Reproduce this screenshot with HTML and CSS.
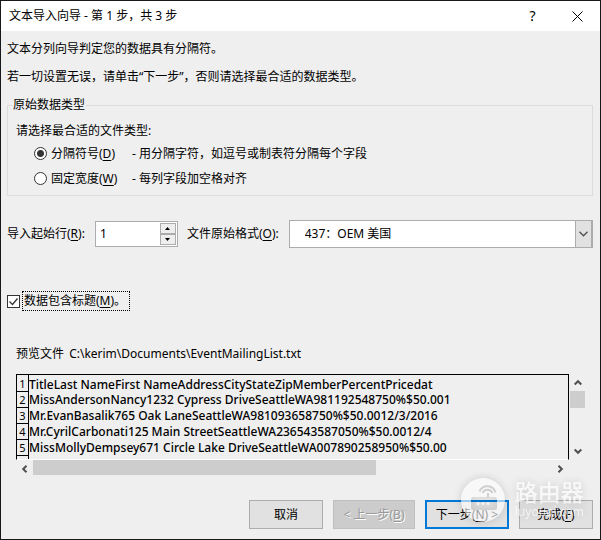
FILE: index.html
```html
<!DOCTYPE html>
<html lang="zh-CN">
<head>
    <meta charset="UTF-8">
    <title>文本导入向导</title>
    <link rel="stylesheet" href="styles.css">
</head>
<body>
<form class="dialog">
    <div class="titleBar">
        <span class="title">文本导入向导 - 第 1 步，共 3 步</span>
        <button type="button" class="titleBtn" aria-label="帮助">?</button>
        <button type="button" class="titleBtn" aria-label="关闭">
            <svg width="11" height="11" viewBox="0 0 11 11"><path d="M.5 .5l10 10M10.5 .5l-10 10" stroke="#000" fill="none"/></svg>
        </button>
    </div>
    <div class="content">
        <p class="tip">文本分列向导判定您的数据具有分隔符。</p>
        <p class="tip">若一切设置无误，请单击“下一步”，否则请选择最合适的数据类型。</p>

        <fieldset class="group">
            <legend>原始数据类型</legend>
            <p class="groupTip">请选择最合适的文件类型:</p>
            <div class="radioRow">
                <input type="radio" name="type" id="delimited" checked>
                <label for="delimited">分隔符号(<u>D</u>)</label>
                <span>- 用分隔字符，如逗号或制表符分隔每个字段</span>
            </div>
            <div class="radioRow">
                <input type="radio" name="type" id="fixed">
                <label for="fixed">固定宽度(<u>W</u>)</label>
                <span>- 每列字段加空格对齐</span>
            </div>
        </fieldset>

        <div class="settings">
            <label for="startRow">导入起始行(<u>R</u>):</label>
            <div class="spinner">
                <input type="text" id="startRow" value="1">
                <div class="spinBtns">
                    <button type="button" aria-label="增加"><svg width="5" height="3" viewBox="0 0 5 3"><path d="M0 3L2.500 0L5 3z"/></svg></button>
                    <button type="button" aria-label="减少"><svg width="5" height="3" viewBox="0 0 5 3"><path d="M0 0L2.500 3L5 0z"/></svg></button>
                </div>
            </div>
            <label for="origin">文件原始格式(<u>O</u>):</label>
            <div class="selectWrap">
                <select id="origin">
                    <option>437：OEM 美国</option>
                </select>
                <span class="selectArrow"><svg width="9" height="6" viewBox="0 0 9 6"><path d="M.5 .8l4 4l4-4" stroke="#505050" stroke-width="1.300" fill="none"/></svg></span>
            </div>
        </div>

        <div class="header">
            <input type="checkbox" id="hasHeader" checked>
            <label for="hasHeader">数据包含标题(<u>M</u>)。</label>
        </div>

        <div class="preview">
            <p class="fileName">预览文件 <span>C:\kerim\Documents\EventMailingList.txt</span></p>
            <div class="viewport">
                <div class="rows">
                    <table>
                        <tr><th>1</th><td>TitleLast NameFirst NameAddressCityStateZipMemberPercentPricedat</td></tr>
                        <tr><th>2</th><td>MissAndersonNancy1232 Cypress DriveSeattleWA981192548750%$50.001</td></tr>
                        <tr><th>3</th><td>Mr.EvanBasalik765 Oak LaneSeattleWA981093658750%$50.0012/3/2016</td></tr>
                        <tr><th>4</th><td>Mr.CyrilCarbonati125 Main StreetSeattleWA236543587050%$50.0012/4</td></tr>
                        <tr><th>5</th><td>MissMollyDempsey671 Circle Lake DriveSeattleWA007890258950%$50.00</td></tr>
                        <tr><th></th><td></td></tr>
                    </table>
                </div>
                <div class="scroll scrollY">
                    <button type="button" aria-label="向上"><svg width="8" height="7" viewBox="0 0 8 7"><path d="M.7 5.500L4 2.200l3.300 3.300"/></svg></button>
                    <div class="track"><div class="thumb"></div></div>
                    <button type="button" aria-label="向下"><svg width="8" height="7" viewBox="0 0 8 7"><path d="M.7 1.500L4 4.800l3.300-3.300"/></svg></button>
                </div>
                <div class="scroll scrollX">
                    <button type="button" aria-label="向左"><svg width="7" height="8" viewBox="0 0 7 8"><path d="M5.500 .7L2.200 4l3.300 3.300"/></svg></button>
                    <div class="track"><div class="thumb"></div></div>
                    <button type="button" aria-label="向右"><svg width="7" height="8" viewBox="0 0 7 8"><path d="M1.500 .7L4.800 4l-3.300 3.300"/></svg></button>
                </div>
            </div>
        </div>

        <div class="footer">
            <button type="button" class="btn">取消</button>
            <button type="button" class="btn wide" disabled>&lt; 上一步(<u>B</u>)</button>
            <button type="button" class="btn wide primary">下一步(<u>N</u>) &gt;</button>
            <button type="submit" class="btn">完成(<u>F</u>)</button>
        </div>
    </div>

    <div class="watermark">
        <svg width="44" height="44" viewBox="0 0 44 44">
            <path fill="#fff" fill-rule="evenodd" d="M22 0a22 22 0 1 0 0 44a22 22 0 1 0 0-44zM12 19h22a2 2 0 0 1 2 2v9a2 2 0 0 1-2 2H12a2 2 0 0 1-2-2v-9a2 2 0 0 1 2-2z"/>
            <path d="M27 19v-4M21.500 15a5.500 5.500 0 0 1 10 0M18.500 13.500a8.500 8.500 0 0 1 16 1" fill="none" stroke="#bbb" stroke-width="2"/>
            <circle cx="17" cy="25.500" r="1.500" fill="#fff"/>
            <circle cx="22" cy="25.500" r="1.500" fill="#fff"/>
            <circle cx="27" cy="25.500" r="1.500" fill="#fff"/>
        </svg>
        <div class="watermarkText">
            <span class="brand">路由器</span>
            <span class="site">luyouqi.com</span>
        </div>
    </div>
</form>
</body>
</html>
```
FILE: styles.css
```css
* {
    box-sizing: border-box;
}

body {
    margin: 0;
    font: 12px/16px "Noto Sans", "Noto Sans CJK SC", sans-serif;
    color: #000;
}

p {
    margin: 0;
}

button, input, select {
    font: inherit;
    color: inherit;
    margin: 0;
    padding: 0;
}

u {
    text-underline-offset: 2px;
}

.dialog {
    position: relative;
    min-height: 100vh;
    border: 1px solid #18181c;
    background: #efefef;
}

.titleBar {
    display: flex;
    align-items: center;
    height: 30px;
    padding-left: 8px;
    background: #fff;
}

.title {
    flex: 1;
}

.titleBtn {
    display: flex;
    align-items: center;
    justify-content: center;
    width: 45px;
    height: 30px;
    border: 0;
    background: none;
    font-size: 14px;
}

.content {
    padding: 10px 7px 10px 6px;
}

.tip {
    margin-bottom: 12px;
}

.group {
    min-width: 0;
    height: 99px;
    margin: 0;
    padding: 10px 8px;
    border: 1px solid #dcdcdc;
}

.group legend {
    margin-left: -4px;
    padding: 0 1px;
}

.groupTip {
    margin-bottom: 2px;
}

.radioRow {
    display: flex;
    align-items: center;
    height: 25px;
    padding-left: 18px;
}

.radioRow label {
    width: 85px;
    padding-left: 4px;
}

.radioRow input {
    appearance: none;
    width: 13px;
    height: 13px;
    border: 1px solid #333;
    border-radius: 50%;
    background: #fff;
}

.radioRow input:checked {
    background: radial-gradient(circle, #333 3px, #fff 4px);
}

.settings {
    display: flex;
    align-items: center;
    height: 28px;
    margin-top: 24px;
}

.spinner {
    display: flex;
    width: 83px;
    height: 26px;
    margin: 0 9px 0 10px;
    padding: 1px;
    border: 1px solid #abadb3;
    background: #fff;
}

.spinner input {
    flex: 1;
    min-width: 0;
    height: 20px;
    padding-left: 3px;
    border: 0;
    outline: 0;
    background: none;
}

.spinBtns {
    display: flex;
    flex-direction: column;
    width: 16px;
}

.spinBtns button {
    display: flex;
    flex: 1;
    align-items: center;
    justify-content: center;
    border: 1px solid #acacac;
    background: #eee;
}

.selectWrap {
    position: relative;
    flex: 1;
    margin-left: 10px;
}

.selectWrap select {
    appearance: none;
    display: block;
    width: 100%;
    height: 28px;
    padding-left: 15px;
    border: 1px solid #acacac;
    border-radius: 0;
    background: #fff;
}

.selectArrow {
    position: absolute;
    top: 0;
    right: 0;
    display: flex;
    align-items: center;
    justify-content: center;
    width: 18px;
    height: 28px;
    border: 1px solid #acacac;
    border-right-width: 2px;
    background: #e1e1e1;
    pointer-events: none;
}

.header {
    display: flex;
    align-items: center;
    margin-top: 43px;
}

.header input {
    appearance: none;
    width: 13px;
    height: 13px;
    border: 1px solid #333;
    background: #fff url("data:image/svg+xml,%3Csvg xmlns='http://www.w3.org/2000/svg' width='11' height='11'%3E%3Cpath d='M1.500 5.500l3 3l5-6' fill='none' stroke='%23333' stroke-width='1.300'/%3E%3C/svg%3E");
}

.header label {
    width: 108px;
    height: 20px;
    margin-left: 2px;
    padding-left: 1px;
    border: 1px dotted #000;
    line-height: 18px;
    white-space: nowrap;
}

.preview {
    margin: 35px 8px 0 9px;
}

.fileName span {
    margin-left: 2px;
}

.viewport {
    display: grid;
    grid-template-columns: 1fr 15px;
    grid-template-rows: 86px 16px;
    column-gap: 1px;
    margin-top: 12px;
}

.rows {
    overflow: hidden;
    border: 1px solid #000;
    border-bottom: 1px solid #fff;
}

.rows table {
    border-spacing: 0;
    font-weight: 500;
}

.rows tr {
    height: 16px;
}

.rows th, .rows td {
    padding: 0;
    line-height: 15px;
    white-space: nowrap;
    vertical-align: top;
}

.rows th {
    width: 12px;
    border: solid #000;
    border-width: 0 1px 1px 0;
    font-size: 11px;
    font-weight: 400;
}

.rows tr:first-child > td {
    padding-top: 2px;
}

.rows tr:first-child > th {
    padding-top: 1px;
}

.scroll {
    display: flex;
}

.scroll button {
    display: flex;
    align-items: center;
    justify-content: center;
    width: 17px;
    height: 17px;
    border: 0;
    background: none;
}

.scroll path {
    fill: none;
    stroke: #505050;
    stroke-width: 2;
}

.scroll .track {
    flex: 1;
}

.scroll .thumb {
    background: #cdcdcd;
}

.scrollY {
    flex-direction: column;
}

.scrollY button {
    width: 15px;
}

.scrollY .thumb {
    height: 17px;
}

.scrollX .thumb {
    width: 66%;
    height: 15px;
}

.footer {
    display: flex;
    justify-content: flex-end;
    gap: 10px;
    margin-top: 24px;
}

.btn {
    width: 74px;
    height: 29px;
    border: 1px solid #adadad;
    background: #e1e1e1;
}

.btn.wide {
    width: 82px;
}

.btn:disabled {
    border-color: #bfbfbf;
    background: #ccc;
    color: #999;
    text-shadow: 1px 1px #fff;
}

.btn.primary {
    width: 84px;
    border: 2px solid #0078d7;
}

/* 右下角水印 */
.watermark {
    position: absolute;
    right: 16px;
    bottom: 17px;
    display: flex;
    gap: 10px;
    color: #fff;
    opacity: 0.6;
    filter: drop-shadow(0 0 4px rgba(0, 0, 0, 0.25));
    pointer-events: none;
}

.watermarkText {
    display: flex;
    flex-direction: column;
}

.brand {
    font-size: 23px;
    line-height: 28px;
    font-weight: 500;
}

.site {
    font-size: 12px;
    line-height: 12px;
}
```
